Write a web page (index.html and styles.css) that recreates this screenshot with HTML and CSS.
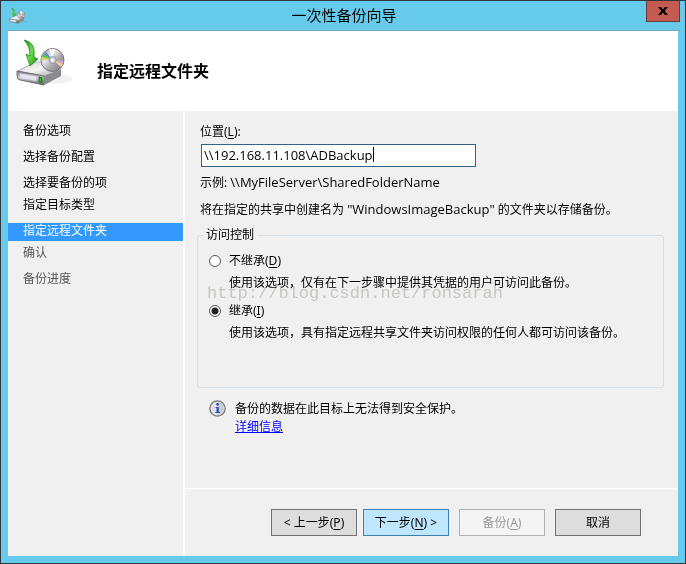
FILE: index.html
```html
<!DOCTYPE html>
<html lang="zh-CN">
<head>
  <meta charset="UTF-8">
  <title>一次性备份向导</title>
  <link rel="stylesheet" href="styles.css">
</head>
<body>
  <div class="window">
    <div class="titlebar">
      <svg class="app-icon" viewBox="0 0 60 52" aria-hidden="true">
        <use href="#backup-icon"/>
      </svg>
      <div class="caption">一次性备份向导</div>
      <button type="button" class="close" aria-label="关闭">
        <svg viewBox="0 0 10 8"><path d="M0 0h3l2 2.500L7 0h3L6.600 4 10 8H7L5 5.500 3 8H0l3.400-4z"/></svg>
      </button>
    </div>

    <div class="client">
      <header class="header">
        <svg class="header-icon" viewBox="0 0 60 52" aria-hidden="true">
          <defs>
            <linearGradient id="arrow" x1="0" y1="0" x2="1" y2="1">
              <stop offset="0" stop-color="#1d8a1a"/>
              <stop offset=".5" stop-color="#6fe04b"/>
              <stop offset="1" stop-color="#128212"/>
            </linearGradient>
            <linearGradient id="top" x1="0" y1="0" x2="1" y2="1">
              <stop offset="0" stop-color="#d0d0d3"/>
              <stop offset=".5" stop-color="#f4f4f4"/>
              <stop offset="1" stop-color="#a0a0a4"/>
            </linearGradient>
            <linearGradient id="front" x1="0" y1="0" x2="0" y2="1">
              <stop offset="0" stop-color="#88888c"/>
              <stop offset=".5" stop-color="#d0d0d4"/>
              <stop offset="1" stop-color="#66666a"/>
            </linearGradient>
            <linearGradient id="disc" x1="0" y1="0" x2="1" y2="1">
              <stop offset="0" stop-color="#8e8e94"/>
              <stop offset=".35" stop-color="#e8e8ec"/>
              <stop offset=".6" stop-color="#a8a8ae"/>
              <stop offset="1" stop-color="#777"/>
            </linearGradient>
          </defs>
          <g id="backup-icon">
            <ellipse cx="38" cy="42" rx="18" ry="5" fill="#000" opacity=".05"/>
            <path d="M2 34L19 25H41L45 33V39L28 48L4 43Q1 42 1 39V36Z" fill="#88888c"/>
            <path d="M2 34L19 25H41L45 33L28 39Z" fill="url(#top)" stroke="#a2a2a6" stroke-width=".7"/>
            <path d="M1 34L28 39V48L4 43Q1 42 1 39Z" fill="url(#front)" stroke="#5f5f63" stroke-width=".8"/>
            <path d="M4 36.500L20 39.500V44L4 40.500Z" fill="#e5e5f2"/>
            <path d="M28 39L45 33V38L28 48Z" fill="#8b8b8e"/>
            <path d="M23 40L26 40.500V45.500L23 45Z" fill="#25c41d" stroke="#19591a" stroke-width=".8"/>
            <circle cx="36.500" cy="23" r="11.500" fill="url(#disc)" stroke="#6f6f74" stroke-width=".9"/>
            <path d="M36.500 23L26 20L28 17Z" fill="#4fd23f"/>
            <path d="M36.500 23L28 17L30 15Z" fill="#5a87dc"/>
            <path d="M36.500 23L25.500 23V20Z" fill="#d9d070"/>
            <path d="M36.500 23L47.500 24L47 27Z" fill="#dda0c4"/>
            <path d="M36.500 23L47 27L45 30Z" fill="#e3d7a0"/>
            <path d="M36.500 23L33 12H39Z" fill="#fff" opacity=".75"/>
            <circle cx="36.500" cy="23" r="3.600" fill="#c9c9d0" stroke="#85858a" stroke-width=".6"/>
            <circle cx="36.500" cy="23" r="1.500" fill="#fff"/>
            <path d="M8 3Q20 5 18 20L22 22L14 29L10 17L14 19Q14 9 8 3Z" fill="url(#arrow)" stroke="#16801a" stroke-width=".7"/>
          </g>
        </svg>
        <h1>指定远程文件夹</h1>
      </header>

      <div class="body">
        <nav class="steps">
          <ul>
            <li>备份选项</li>
            <li>选择备份配置</li>
            <li class="tight">选择要备份的项</li>
            <li>指定目标类型</li>
            <li class="current tight">指定远程文件夹</li>
            <li class="pending">确认</li>
            <li class="pending">备份进度</li>
          </ul>
        </nav>

        <form class="main">
          <div class="content">
            <label class="line" for="location">位置(<u>L</u>):</label>
            <div class="field">
              <input type="text" id="location" class="path" value="\\192.168.11.108\ADBackup">
              <span class="caret"></span>
            </div>
            <p class="line">示例: <span class="path">\\MyFileServer\SharedFolderName</span></p>
            <p class="line note">将在指定的共享中创建名为 <span class="path">"WindowsImageBackup"</span> 的文件夹以存储备份。</p>

            <fieldset class="access">
              <legend>访问控制</legend>
              <div class="option">
                <input type="radio" name="inherit" id="inheritNo">
                <label for="inheritNo">不继承(<u>D</u>)</label>
                <p>使用该选项，仅有在下一步骤中提供其凭据的用户可访问此备份。</p>
              </div>
              <div class="option">
                <input type="radio" name="inherit" id="inheritYes" checked>
                <label for="inheritYes">继承(<u>I</u>)</label>
                <p>使用该选项，具有指定远程共享文件夹访问权限的任何人都可访问该备份。</p>
              </div>
              <div class="watermark">http://blog.csdn.net/ronsarah</div>
            </fieldset>

            <div class="info">
              <svg class="info-icon" viewBox="0 0 17 17" aria-hidden="true">
                <circle cx="8.500" cy="8.500" r="7.600" fill="#e4e4e8" stroke="#77777b" stroke-width="1.400"/>
                <path d="M9 2a6.500 6.500 0 0 1 0 13z" fill="#cdced3"/>
                <circle cx="8.500" cy="4.300" r="1.400" fill="#2450b8"/>
                <path d="M6.500 7H9.800V12H11V13H6.300V12H7.500V8H6.500z" fill="#2450b8"/>
              </svg>
              <div>
                <p>备份的数据在此目标上无法得到安全保护。</p>
                <a href="#">详细信息</a>
              </div>
            </div>
          </div>

          <div class="footer">
            <button type="button">&lt; 上一步(<u>P</u>)</button>
            <button type="button" class="default">下一步(<u>N</u>) &gt;</button>
            <button type="button" class="spaced" disabled>备份(<u>A</u>)</button>
            <button type="button" class="spaced">取消</button>
          </div>
        </form>
      </div>
    </div>
  </div>
</body>
</html>
```
FILE: styles.css
```css
* { box-sizing: border-box; }
body { margin: 0; font: 12px/18px "Noto Sans", "Noto Sans CJK SC", sans-serif; color: #000; }
p, h1, ul { margin: 0; padding: 0; }
button, input { font: inherit; color: inherit; }
u { text-underline-offset: 2px; }

.window { display: flex; flex-direction: column; min-height: 100vh; padding: 0 7px 7px; border: 1px solid #30343c; background: #66caea; }

/* title bar */
.titlebar { display: grid; grid-template-columns: 34px 1fr 34px; height: 30px; margin-right: -2px; border-bottom: 1px solid #76a9c4; }
.app-icon { width: 20px; height: 18px; margin: 6px 0 0 1px; }
.caption { font-size: 15px; line-height: 29px; text-align: center; }
.close { display: flex; align-items: center; justify-content: center; height: 21px; padding: 0; border: 1px solid #683a3c; border-top: 0; background: #c35b50; }
.close svg { width: 10px; height: 8px; }

.client { display: flex; flex: 1; flex-direction: column; background: #f0f0f0; }
.header { display: flex; gap: 21px; height: 80px; padding: 6px 8px; background: #fff; }
.header-icon { width: 60px; height: 52px; }
.header h1 { font-size: 16px; line-height: 24px; margin-top: 22px; font-weight: bold; }

.body { display: grid; grid-template-columns: 177px 1fr; flex: 1; }

/* wizard steps */
.steps { padding-top: 12px; border-right: 2px solid #fff; }
.steps ul { list-style: none; }
.steps li { height: 18px; margin-bottom: 8px; padding-left: 15px; line-height: 16px; }
.steps .tight { margin-bottom: 4px; }
.steps .current { background: #3399ff; color: #fff; }
.steps .pending { color: #555; }

/* page */
.main { display: flex; flex-direction: column; min-width: 0; }
.content { flex: 1; padding: 12px 14px 0 12px; }
.line { display: block; padding-left: 3px; }
.path { font-family: "Open Sans", "Noto Sans CJK SC", sans-serif; font-size: 13px; }
.field { position: relative; margin: 3px 0 6px 4px; }
.field input { display: block; width: 275px; height: 23px; padding: 0 2px 2px; border: 1px solid #2f628f; background: #fff; }
.caret { position: absolute; left: 172px; top: 3px; width: 1px; height: 15px; background: #000; }
.note { margin-top: 8px; }

.access { position: relative; height: 162px; margin: 7px 0 12px; padding: 8px 11px; border: 1px solid #d5dfe5; border-radius: 3px; }
.access legend { margin-left: -6px; padding: 0 3px; }
.option { display: grid; grid-template-columns: 12px 1fr; column-gap: 8px; align-items: center; margin-bottom: 10px; }
.option p { grid-column: 2; margin-top: 4px; }
.option input { appearance: none; width: 12px; height: 12px; margin: 0; border: 1px solid #555; border-radius: 50%; background: #fff; }
.option input:checked { background: radial-gradient(circle, #222 3px, #fff 4px); }
.watermark { position: absolute; left: 9px; top: 41px; font: 17px/18px "Liberation Mono", monospace; color: #d4d4d0; pointer-events: none; mix-blend-mode: multiply; }

.info { display: flex; gap: 9px; padding-left: 12px; }
.info-icon { width: 17px; height: 17px; }
.info a { color: #0000ff; }

.footer { display: flex; justify-content: flex-end; gap: 6px; padding: 20px 37px; border-top: 1px solid #fff; }
.footer button { width: 86px; height: 27px; padding: 0; border: 1px solid #707070; background: #ddd; white-space: nowrap; }
.footer .default { border-color: #3c7fb1; background: #bee6fd; }
.footer .spaced { margin-left: 4px; }
.footer button:disabled { border-color: #adb2b5; background: #f4f4f4; color: #999; }
```
